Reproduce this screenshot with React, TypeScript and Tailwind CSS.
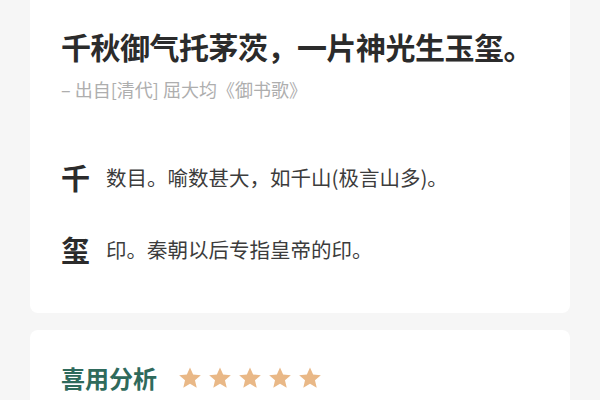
import React from "react";

const FONT = "font-['Noto_Sans_CJK_SC','Noto_Sans',sans-serif]";

const definitions = [
  { char: "千", text: "数目。喻数甚大，如千山(极言山多)。" },
  { char: "玺", text: "印。秦朝以后专指皇帝的印。" },
];

const Star = () => (
  <svg viewBox="0 0 24 24" className="h-[26px] w-[26px]" fill="#e9b887">
    <path d="M12 2.2l2.9 6.6 7.1.6-5.4 4.7 1.6 7-6.2-3.7-6.2 3.7 1.6-7L2 9.4l7.1-.6z" />
  </svg>
);

export default function App() {
  return (
    <div className={`h-[400px] overflow-hidden bg-[#f6f6f6] px-[30px] ${FONT}`}>
      <div className="-mt-4 rounded-b-lg bg-white px-[31px] pb-[44px] pt-[42px]">
        <h1 className="text-[30px] font-bold leading-[40px] tracking-[-0.5px] text-[#2b2b2b]">
          千秋御气托茅茨，一片神光生玉玺。
        </h1>
        <p className="mt-[10px] text-[18px] leading-[26px] text-[#aeaeae]">
          – 出自[清代] 屈大均《御书歌》
        </p>
        <div className="mt-[55px] flex flex-col gap-[32px]">
          {definitions.map((d) => (
            <div key={d.char} className="flex items-center gap-[15px]">
              <span className="w-[30px] text-[29px] font-bold leading-[40px] text-[#2b2b2b]">
                {d.char}
              </span>
              <span className="text-[20.5px] leading-[40px] text-[#3c3c3c]">{d.text}</span>
            </div>
          ))}
        </div>
      </div>
      <div className="mt-[17px] rounded-lg bg-white px-[31px] pt-[31px] pb-8">
        <div className="flex items-center gap-[20px]">
          <h2 className="text-[24px] font-bold leading-[34px] text-[#2f6a5c]">喜用分析</h2>
          <div className="flex gap-[4px]">
            {[...Array(5)].map((_, i) => (
              <Star key={i} />
            ))}
          </div>
        </div>
      </div>
    </div>
  );
}
